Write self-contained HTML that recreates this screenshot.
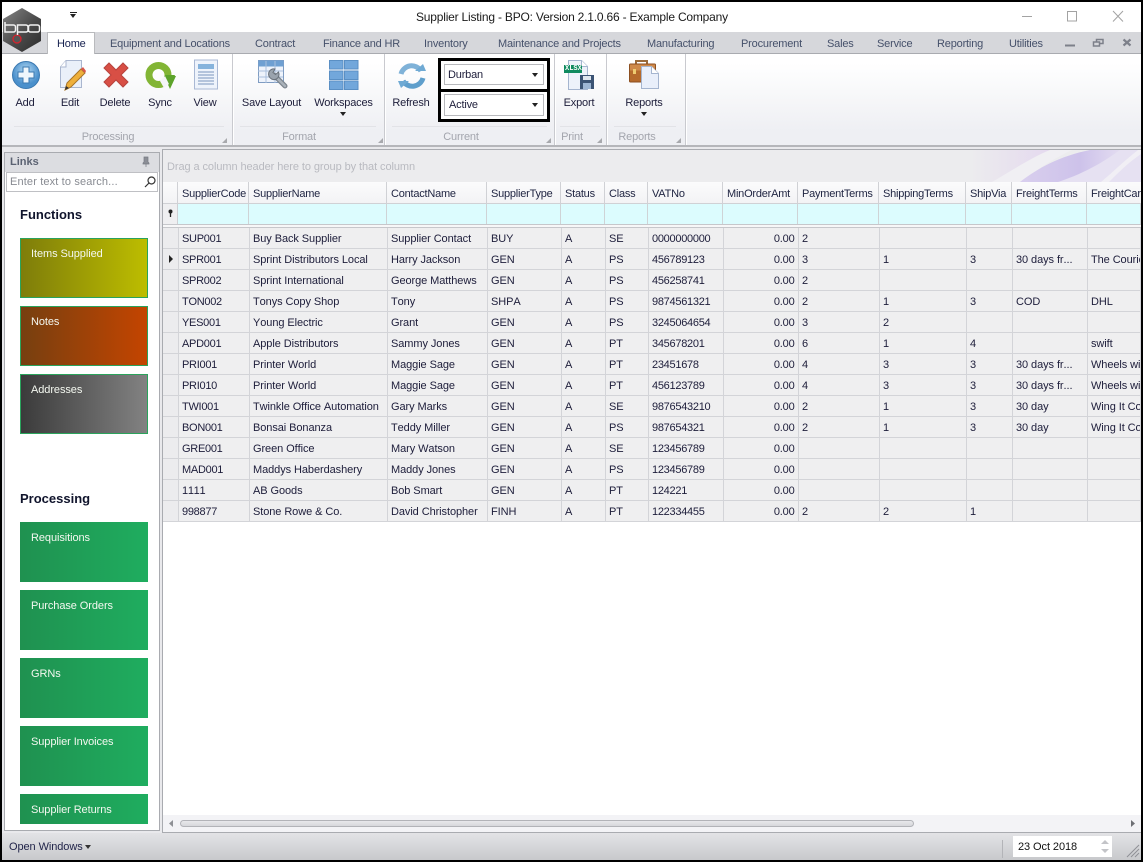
<!DOCTYPE html>
<html><head><meta charset="utf-8"><title>Supplier Listing</title>
<style>
html,body{margin:0;padding:0;background:#000}
body{width:1143px;height:862px;overflow:hidden;position:relative;font-family:"Liberation Sans",sans-serif;font-size:11px;letter-spacing:-.18px;color:#1d1d3a}
div,span,svg{position:absolute}
#w{left:0;top:0;width:1143px;height:862px;border:2px solid #000;box-sizing:border-box;background:#e9e9ec}
.a{white-space:nowrap}
.tab{top:37px;line-height:14px;color:#45506a;white-space:nowrap}
.rl{top:96px;line-height:14px;color:#1d1d3a;white-space:nowrap;transform:translateX(-50%)}
.gl{top:130px;line-height:14px;color:#a3a5ad;white-space:nowrap;transform:translateX(-50%)}
.sep{top:54px;width:1px;height:91px;background:#c9cacf;box-shadow:1px 0 0 #fff}
.gline{top:126px;height:1px;background:#e2e3e7}
.cor{top:138px;width:0;height:0;border-left:5px solid transparent;border-bottom:5px solid #a8a9ad}
.dd{width:0;height:0;border-left:3.5px solid transparent;border-right:3.5px solid transparent;border-top:4px solid #222}
.btn{left:20px;width:128px;height:60px;color:#fff;box-sizing:border-box}
.btn span{position:absolute;left:11px;top:9px;line-height:14px;white-space:nowrap;color:#f4f8f0;letter-spacing:-.08px}
.btn.b span{left:10px;top:8px}
.btn.b{border:1px solid #2aa35c}
.g{background:linear-gradient(90deg,#1f9150,#1fad5f)}
.h{font:bold 13px "Liberation Sans",sans-serif;letter-spacing:0;color:#10142c;left:20px}
table{position:absolute;border-collapse:collapse;table-layout:fixed;left:163px;top:228px;width:977px}
td{height:17px;padding:3px 0 0 3.5px;border:1px solid #d3d4d8;border-top:0;background:#efeff0;white-space:nowrap;overflow:hidden;line-height:17px;color:#1d1d3a;letter-spacing:-.08px;font-kerning:none}
td:nth-child(2),td:nth-child(8){letter-spacing:-.28px}
td.r{text-align:right;padding:3px 3px 0 0;letter-spacing:-.2px}
td.i{background:#ececee;padding:0;border-left:0}
.hc{top:182px;height:21px;border-right:1px solid #d0d1d5;box-sizing:border-box;padding:2px 0 0 4px;line-height:21px;background:linear-gradient(#fbfbfc,#f3f3f5);color:#1e2340;white-space:nowrap;overflow:hidden;letter-spacing:-.22px}
.fc{top:204px;height:20px;border-right:1px solid #cfd3d6;background:#dcfcfe;box-sizing:border-box}
</style></head><body>
<div id="w"></div>

<!-- title bar -->
<div style="left:2px;top:2px;width:1139px;height:30px;background:#fff"></div>
<div class="a" style="left:416px;top:10px;font-size:12px;letter-spacing:-.2px;color:#1a1a1a">Supplier Listing - BPO: Version 2.1.0.66 - Example Company</div>
<div style="left:70px;top:12px;width:7px;height:1px;background:#222"></div>
<div class="dd" style="left:70px;top:14px"></div>
<svg style="left:1020px;top:8px" width="110" height="16" fill="none" stroke="#a3a3a3"><path d="M2 8.500H12"/><path d="M47.500 3.500h9v9.500h-9z"/><path d="M93 3l10 10.500M103 3L93 13.500"/></svg>

<!-- tab strip -->
<div style="left:2px;top:32px;width:1139px;height:21px;background:#d6d7db;border-bottom:1px solid #a9abb0"></div>
<div style="left:47px;top:32px;width:48px;height:23px;background:#fff;border:1px solid #b9babd;border-bottom:0;box-sizing:border-box"></div>
<div class="a" style="left:57px;top:37px;line-height:14px;color:#16214f">Home</div>
<div class="tab" style="left:110px">Equipment and Locations</div>
<div class="tab" style="left:255px">Contract</div>
<div class="tab" style="left:323px">Finance and HR</div>
<div class="tab" style="left:424px">Inventory</div>
<div class="tab" style="left:498px">Maintenance and Projects</div>
<div class="tab" style="left:647px">Manufacturing</div>
<div class="tab" style="left:741px">Procurement</div>
<div class="tab" style="left:827px">Sales</div>
<div class="tab" style="left:877px">Service</div>
<div class="tab" style="left:937px">Reporting</div>
<div class="tab" style="left:1009px">Utilities</div>
<svg style="left:1062px;top:36px" width="72" height="14" fill="none"><path d="M3 9.500h10" stroke="#7d808a" stroke-width="2"/><path d="M31.500 6h6v4h-6zM34.500 5.500V3.500h6.500v4h-3" stroke="#7d808a" stroke-width="1.500"/><path d="M61.500 3.500l7 6M68.500 3.500l-7 6" stroke="#7d808a" stroke-width="2.200"/></svg>

<!-- ribbon -->
<div style="left:2px;top:54px;width:1139px;height:91px;background:linear-gradient(#fff 10%,#eeeff3 85%);border-bottom:2px solid #b5b6ba"></div>
<div class="sep" style="left:232px"></div><div class="sep" style="left:384px"></div><div class="sep" style="left:554px"></div><div class="sep" style="left:606px"></div><div class="sep" style="left:685px"></div>
<div class="gline" style="left:14px;width:210px"></div><div class="gline" style="left:240px;width:136px"></div><div class="gline" style="left:392px;width:155px"></div><div class="gline" style="left:560px;width:40px"></div><div class="gline" style="left:614px;width:62px"></div>
<div class="cor" style="left:222px"></div><div class="cor" style="left:378px"></div><div class="cor" style="left:546px"></div><div class="cor" style="left:597px"></div><div class="cor" style="left:676px"></div>

<!-- icons -->
<svg style="left:10px;top:59px" width="32" height="32"><defs><radialGradient id="b" cx=".5" cy=".35"><stop offset="0" stop-color="#b4d9f2"/><stop offset="1" stop-color="#4a90cc"/></radialGradient></defs><circle cx="16" cy="16" r="13.500" fill="url(#b)" stroke="#3a78b0"/><path d="M13 8h6v5h5v6h-5v5h-6v-5H8v-6h5z" fill="#eef6fc" stroke="#3a78b0"/></svg>
<svg style="left:57px;top:59px" width="30" height="34"><path d="M3.500 8L9 1.500h15.500v27H3.500z" fill="#eaf0f9" stroke="#a9b6cf"/><path d="M3.500 8H9V1.500" fill="#fff" stroke="#a9b6cf"/><path d="M8 31l2-7L24 10l4 4-14 14z" fill="#eeb03c" stroke="#a87428"/><path d="M24 10l4 4 1-2-3-4z" fill="#d8564a"/><path d="M8 31l1-4 3 2z" fill="#333"/></svg>
<svg style="left:102px;top:61px" width="28" height="28"><path d="M2 7l5-5 7 7 7-7 5 5-7 7 7 7-5 5-7-7-7 7-5-5 7-7z" fill="#d84f45" stroke="#b7433d"/></svg>
<svg style="left:145px;top:60px" width="32" height="32" fill="none"><circle cx="13.500" cy="15" r="9.500" stroke="#82b535" stroke-width="7"/><path d="M19 16h12l-6 13z" fill="#5da32b"/><path d="M15 21l5-5 4 8-5 4z" fill="#f4f5f7"/><path d="M20 15h10l-5 11z" fill="#5da32b"/></svg>
<svg style="left:193px;top:59px" width="26" height="32"><rect x="1.500" y="1" width="23" height="29" fill="#eef3fb" stroke="#a9b8d4"/><rect x="5" y="5" width="16" height="5" fill="#86b3dc"/><path d="M5 13h16M5 16h16M5 19h16M5 22h16M5 25h16" stroke="#7a96bd"/></svg>
<svg style="left:257px;top:59px" width="32" height="32"><rect x="1.500" y="1.500" width="25" height="22" fill="#eef3fb" stroke="#7f9cc2"/><rect x="1.500" y="1.500" width="25" height="6" fill="#6fa0d2"/><path d="M9 2v22M18 2v22M1 12h25M1 18h25" stroke="#a9bfdc"/><path d="M17 16l11 11" stroke="#7d858e" stroke-width="5" stroke-linecap="round"/><path d="M17 16l11 11" stroke="#aab2ba" stroke-width="2.500" stroke-linecap="round"/><path d="M12.500 12a5.500 5.500 0 0 0 7 8 5.500 5.500 0 0 0 2-7l-3 2.500-2.500-2 2-3.500a5.500 5.500 0 0 0-5.500 2z" fill="#9aa3ad" stroke="#687079"/></svg>
<svg style="left:329px;top:60px" width="30" height="30" fill="#72a7db" stroke="#5a8fc4"><rect x=".5" y=".5" width="13.500" height="8.500"/><rect x="15.500" y=".5" width="13.500" height="8.500"/><rect x=".5" y="11" width="13.500" height="8.500"/><rect x="15.500" y="11" width="13.500" height="8.500"/><rect x=".5" y="21" width="13.500" height="8.500"/><rect x="15.500" y="21" width="13.500" height="8.500"/></svg>
<svg style="left:396px;top:62px" width="32" height="28" fill="none"><path d="M5 12a11 11 0 0 1 20-3" stroke="#7fb2d8" stroke-width="5"/><path d="M27 16a11 11 0 0 1-20 3" stroke="#5f9fcc" stroke-width="5"/><path d="M19 9h11l-3-7zM13 19H2l3 7z" fill="#6faad4"/></svg>
<svg style="left:563px;top:59px" width="32" height="32"><path d="M5.500 1.500h13l6 6v23h-19z" fill="#edf2fa" stroke="#a5b5cf"/><path d="M18.500 1.500v6h6" fill="#fff" stroke="#a5b5cf"/><rect x="1" y="6" width="18" height="8" fill="#0f8a5f"/><rect x="17" y="16" width="14" height="14" fill="#3b5374"/><rect x="20" y="17" width="8" height="4" fill="#dfe6ee"/><rect x="20" y="24" width="8" height="6" fill="#9db6d4"/></svg>
<div class="a" style="left:565px;top:65px;font:bold 7px/8px 'Liberation Mono',monospace;letter-spacing:0;color:#fff">XLSX</div>
<svg style="left:628px;top:59px" width="32" height="32"><path d="M8 5V2h11v3" fill="none" stroke="#9a6a3a" stroke-width="2"/><rect x="1.500" y="5" width="26" height="18" rx="1" fill="#b56a2c" stroke="#8c4f20"/><rect x="2" y="5.500" width="25" height="6" fill="#cf8a4a"/><rect x="5" y="10" width="3" height="5" fill="#eecb71"/><path d="M13.500 7.500h10l7 7v15h-17z" fill="#e9effa" stroke="#a5b5cf"/><path d="M23.500 7.500v7h7" fill="#fff" stroke="#a5b5cf"/></svg>

<div class="rl" style="left:25px">Add</div><div class="rl" style="left:70px">Edit</div><div class="rl" style="left:115px">Delete</div><div class="rl" style="left:160px">Sync</div><div class="rl" style="left:205px">View</div>
<div class="rl" style="left:271.500px">Save Layout</div><div class="rl" style="left:343.500px">Workspaces</div><div class="rl" style="left:411px">Refresh</div><div class="rl" style="left:579px">Export</div><div class="rl" style="left:644px">Reports</div>
<div class="dd" style="left:340px;top:112px"></div><div class="dd" style="left:641px;top:112px"></div>
<div class="gl" style="left:108px">Processing</div><div class="gl" style="left:299px">Format</div><div class="gl" style="left:461px">Current</div><div class="gl" style="left:572px">Print</div><div class="gl" style="left:637px">Reports</div>

<!-- combos -->
<div style="left:438px;top:58px;width:112px;height:64px;background:#000"></div>
<div style="left:441px;top:61px;width:106px;height:28px;background:#fff"></div>
<div style="left:441px;top:92px;width:106px;height:27px;background:#fff"></div>
<div style="left:444px;top:64px;width:100px;height:21px;border:1px solid #b8b9bd;box-sizing:border-box"></div>
<div style="left:444px;top:94px;width:100px;height:22px;border:1px solid #b8b9bd;box-sizing:border-box"></div>
<div class="a" style="left:448px;top:68px;line-height:14px">Durban</div><div class="a" style="left:449px;top:98px;line-height:14px">Active</div>
<div class="dd" style="left:532px;top:73px"></div><div class="dd" style="left:532px;top:103px"></div>

<!-- logo -->
<svg style="left:2px;top:7px" width="40" height="46"><defs><linearGradient id="l" x1="0" y1="0" x2="1" y2="1"><stop offset="0" stop-color="#858585"/><stop offset=".55" stop-color="#4a4a4a"/><stop offset="1" stop-color="#2c2c2c"/></linearGradient></defs><path d="M20 1l19 11v22L20 45 1 34V12z" fill="url(#l)"/><circle cx="15" cy="32" r="4" fill="#555" stroke="#d8222c" stroke-width="1.300"/><path d="M3 15v10h8.500a2 2 0 0 0 2-2v-3a2 2 0 0 0-2-2H3M15.500 28V18h8.500a2 2 0 0 1 2 2v3a2 2 0 0 1-2 2h-8.500M28.500 18h7a2 2 0 0 1 2 2v3a2 2 0 0 1-2 2h-7a2 2 0 0 1-2-2v-3a2 2 0 0 1 2-2z" fill="none" stroke="#f2f2f2" stroke-width="1.500"/></svg>

<!-- left panel -->
<div style="left:4px;top:152px;width:156px;height:679px;background:#fff;border:1px solid #a9abb0;box-sizing:border-box"></div>
<div style="left:5px;top:153px;width:154px;height:19px;background:#dcdde1"></div>
<div class="a" style="left:10px;top:155px;line-height:14px;font-weight:bold;letter-spacing:0;color:#5b6272">Links</div>
<svg style="left:141px;top:156px" width="10" height="12"><path d="M3 1h4v5l1 1v1H2V7l1-1zM5 8v3" fill="#8b8e96" stroke="#777a83" stroke-width=".7"/></svg>
<div style="left:6px;top:172px;width:152px;height:20px;background:#fff;border:1px solid #bfc0c4;box-sizing:border-box"></div>
<div class="a" style="left:10px;top:175px;line-height:14px;letter-spacing:.14px;color:#888b92">Enter text to search...</div>
<svg style="left:143px;top:175px" width="14" height="14" fill="none" stroke="#333" stroke-width="1.200"><circle cx="8.500" cy="5.500" r="3.500"/><path d="M6 8l-4 4"/></svg>
<div class="h" style="top:207px">Functions</div>
<div class="h" style="top:491px">Processing</div>
<div class="btn b" style="top:238px;background:linear-gradient(90deg,#7e7d0a,#bdbd00)"><span>Items Supplied</span></div>
<div class="btn b" style="top:306px;background:linear-gradient(90deg,#763f10,#c44500)"><span>Notes</span></div>
<div class="btn b" style="top:374px;background:linear-gradient(90deg,#3b3b3b,#828282)"><span>Addresses</span></div>
<div class="btn g" style="top:522px"><span>Requisitions</span></div>
<div class="btn g" style="top:590px"><span>Purchase Orders</span></div>
<div class="btn g" style="top:658px"><span>GRNs</span></div>
<div class="btn g" style="top:726px"><span>Supplier Invoices</span></div>
<div class="btn g" style="top:794px;height:30px"><span>Supplier Returns</span></div>

<!-- grid panel -->
<div style="left:162px;top:149px;width:979px;height:684px;background:#fff;border:1px solid #a9abb0;border-right:0;box-sizing:border-box"></div>
<div style="left:163px;top:150px;width:978px;height:32px;background:#ececee;overflow:hidden"></div>
<svg style="left:960px;top:150px" width="181" height="32"><defs><linearGradient id="p1" x1="0" x2="1"><stop offset="0" stop-color="#ececee"/><stop offset="1" stop-color="#e4d8ef"/></linearGradient><linearGradient id="p2" x1="0" x2="1"><stop offset="0" stop-color="#d9cfee"/><stop offset=".6" stop-color="#cdc2ea"/><stop offset="1" stop-color="#e3dcf1"/></linearGradient></defs><path d="M10 0h85L45 32H10z" fill="url(#p1)"/><path d="M90 0h22C95 8 75 20 62 32H32C50 22 70 8 90 0z" fill="#f0eff3"/><path d="M60 32C78 18 100 6 130 0h51v32z" fill="#e6e1f2"/><path d="M60 32C78 18 100 6 130 0h30c-14 10-32 22-62 32z" fill="url(#p2)"/><path d="M178 0h3v4c-12 8-22 18-32 28h-8c12-10 24-22 37-32z" fill="#f1eff5"/></svg>
<div class="a" style="left:167px;top:161px;letter-spacing:-.08px;color:#b9bac0">Drag a column header here to group by that column</div>

<div class="hc" style="left:163px;width:15px"></div>
<div class="hc" style="left:178px;width:71px">SupplierCode</div>
<div class="hc" style="left:249px;width:138px">SupplierName</div>
<div class="hc" style="left:387px;width:100px">ContactName</div>
<div class="hc" style="left:487px;width:74px">SupplierType</div>
<div class="hc" style="left:561px;width:44px">Status</div>
<div class="hc" style="left:605px;width:43px">Class</div>
<div class="hc" style="left:648px;width:75px">VATNo</div>
<div class="hc" style="left:723px;width:75px">MinOrderAmt</div>
<div class="hc" style="left:798px;width:81px">PaymentTerms</div>
<div class="hc" style="left:879px;width:87px">ShippingTerms</div>
<div class="hc" style="left:966px;width:46px">ShipVia</div>
<div class="hc" style="left:1012px;width:75px">FreightTerms</div>
<div class="hc" style="left:1087px;width:54px;border-right:0">FreightCar</div>
<div style="left:163px;top:203px;width:978px;height:1px;background:#d0d1d5"></div>

<div style="left:163px;top:204px;width:15px;height:20px;background:#efeff1;border-right:1px solid #cfd0d4;box-sizing:border-box"></div>
<svg style="left:167px;top:209px" width="7" height="9"><circle cx="3.500" cy="2.500" r="2" fill="#222"/><path d="M3.500 4v4" stroke="#222" stroke-width="1.300"/></svg>
<div class="fc" style="left:178px;width:71px"></div><div class="fc" style="left:249px;width:138px"></div><div class="fc" style="left:387px;width:100px"></div><div class="fc" style="left:487px;width:74px"></div><div class="fc" style="left:561px;width:44px"></div><div class="fc" style="left:605px;width:43px"></div><div class="fc" style="left:648px;width:75px"></div><div class="fc" style="left:723px;width:75px"></div><div class="fc" style="left:798px;width:81px"></div><div class="fc" style="left:879px;width:87px"></div><div class="fc" style="left:966px;width:46px"></div><div class="fc" style="left:1012px;width:75px"></div><div class="fc" style="left:1087px;width:54px"></div>
<div style="left:163px;top:224px;width:978px;height:4px;background:#f7f7f8;border-top:1px solid #c6c7cb;border-bottom:1px solid #c6c7cb;box-sizing:border-box"></div>

<table>
<colgroup><col style="width:15px"><col style="width:71px"><col style="width:138px"><col style="width:100px"><col style="width:74px"><col style="width:44px"><col style="width:43px"><col style="width:75px"><col style="width:75px"><col style="width:81px"><col style="width:87px"><col style="width:46px"><col style="width:75px"><col style="width:53px"></colgroup>
<tr><td class="i"></td><td>SUP001</td><td>Buy Back Supplier</td><td>Supplier Contact</td><td>BUY</td><td>A</td><td>SE</td><td>0000000000</td><td class="r">0.00</td><td>2</td><td></td><td></td><td></td><td></td></tr>
<tr><td class="i"></td><td>SPR001</td><td>Sprint Distributors Local</td><td>Harry Jackson</td><td>GEN</td><td>A</td><td>PS</td><td>456789123</td><td class="r">0.00</td><td>3</td><td>1</td><td>3</td><td>30 days fr...</td><td>The Courier</td></tr>
<tr><td class="i"></td><td>SPR002</td><td>Sprint International</td><td>George Matthews</td><td>GEN</td><td>A</td><td>PS</td><td>456258741</td><td class="r">0.00</td><td>2</td><td></td><td></td><td></td><td></td></tr>
<tr><td class="i"></td><td>TON002</td><td>Tonys Copy Shop</td><td>Tony</td><td>SHPA</td><td>A</td><td>PS</td><td>9874561321</td><td class="r">0.00</td><td>2</td><td>1</td><td>3</td><td>COD</td><td>DHL</td></tr>
<tr><td class="i"></td><td>YES001</td><td>Young Electric</td><td>Grant</td><td>GEN</td><td>A</td><td>PS</td><td>3245064654</td><td class="r">0.00</td><td>3</td><td>2</td><td></td><td></td><td></td></tr>
<tr><td class="i"></td><td>APD001</td><td>Apple Distributors</td><td>Sammy Jones</td><td>GEN</td><td>A</td><td>PT</td><td>345678201</td><td class="r">0.00</td><td>6</td><td>1</td><td>4</td><td></td><td>swift</td></tr>
<tr><td class="i"></td><td>PRI001</td><td>Printer World</td><td>Maggie Sage</td><td>GEN</td><td>A</td><td>PT</td><td>23451678</td><td class="r">0.00</td><td>4</td><td>3</td><td>3</td><td>30 days fr...</td><td>Wheels wit</td></tr>
<tr><td class="i"></td><td>PRI010</td><td>Printer World</td><td>Maggie Sage</td><td>GEN</td><td>A</td><td>PT</td><td>456123789</td><td class="r">0.00</td><td>4</td><td>3</td><td>3</td><td>30 days fr...</td><td>Wheels wit</td></tr>
<tr><td class="i"></td><td>TWI001</td><td>Twinkle Office Automation</td><td>Gary Marks</td><td>GEN</td><td>A</td><td>SE</td><td>9876543210</td><td class="r">0.00</td><td>2</td><td>1</td><td>3</td><td>30 day</td><td>Wing It Co</td></tr>
<tr><td class="i"></td><td>BON001</td><td>Bonsai Bonanza</td><td>Teddy Miller</td><td>GEN</td><td>A</td><td>PS</td><td>987654321</td><td class="r">0.00</td><td>2</td><td>1</td><td>3</td><td>30 day</td><td>Wing It Co</td></tr>
<tr><td class="i"></td><td>GRE001</td><td>Green Office</td><td>Mary Watson</td><td>GEN</td><td>A</td><td>SE</td><td>123456789</td><td class="r">0.00</td><td></td><td></td><td></td><td></td><td></td></tr>
<tr><td class="i"></td><td>MAD001</td><td>Maddys Haberdashery</td><td>Maddy Jones</td><td>GEN</td><td>A</td><td>PS</td><td>123456789</td><td class="r">0.00</td><td></td><td></td><td></td><td></td><td></td></tr>
<tr><td class="i"></td><td>1111</td><td>AB Goods</td><td>Bob Smart</td><td>GEN</td><td>A</td><td>PT</td><td>124221</td><td class="r">0.00</td><td></td><td></td><td></td><td></td><td></td></tr>
<tr><td class="i"></td><td>998877</td><td>Stone Rowe &amp; Co.</td><td>David Christopher</td><td>FINH</td><td>A</td><td>PT</td><td>122334455</td><td class="r">0.00</td><td>2</td><td>2</td><td>1</td><td></td><td></td></tr>
</table>
<svg style="left:168px;top:255px" width="6" height="8"><path d="M1 0l4 4-4 4z" fill="#222"/></svg>

<!-- scrollbar -->
<div style="left:163px;top:815px;width:978px;height:17px;background:#f3f3f6"></div>
<svg style="left:167px;top:819px" width="8" height="9"><path d="M6 1L2 4.500 6 8z" fill="#8e9095"/></svg>
<div style="left:180px;top:820px;width:734px;height:7px;background:linear-gradient(#e8e8eb,#d6d7db);border:1px solid #b2b3b8;border-radius:4px;box-sizing:border-box"></div>
<svg style="left:1129px;top:819px" width="8" height="9"><path d="M2 1l4 3.500L2 8z" fill="#6d6f74"/></svg>

<!-- status bar -->
<div style="left:2px;top:833px;width:1139px;height:27px;background:linear-gradient(#e3e3e6,#c8c9cc)"></div>
<div class="a" style="left:9px;top:840px;line-height:14px;letter-spacing:-.08px;color:#22254a">Open Windows</div>
<div class="dd" style="left:85px;top:845px;border-top-color:#333"></div>
<div style="left:1002px;top:840px;width:1px;height:18px;background:#b3b4b8"></div>
<div style="left:1013px;top:836px;width:99px;height:21px;background:#fff"></div>
<div class="a" style="left:1018px;top:840px;line-height:14px;letter-spacing:-.08px;color:#111">23 Oct 2018</div>
<svg style="left:1100px;top:838px" width="10" height="17" fill="#c3c4c8"><path d="M5 2l4 4H1zM1 11h8l-4 4z"/></svg>
<svg style="left:1126px;top:844px" width="14" height="14" stroke="#8f9095" fill="none"><path d="M13 1L1 13M13 5l-8 8M13 9l-4 4"/></svg>
</body></html>
